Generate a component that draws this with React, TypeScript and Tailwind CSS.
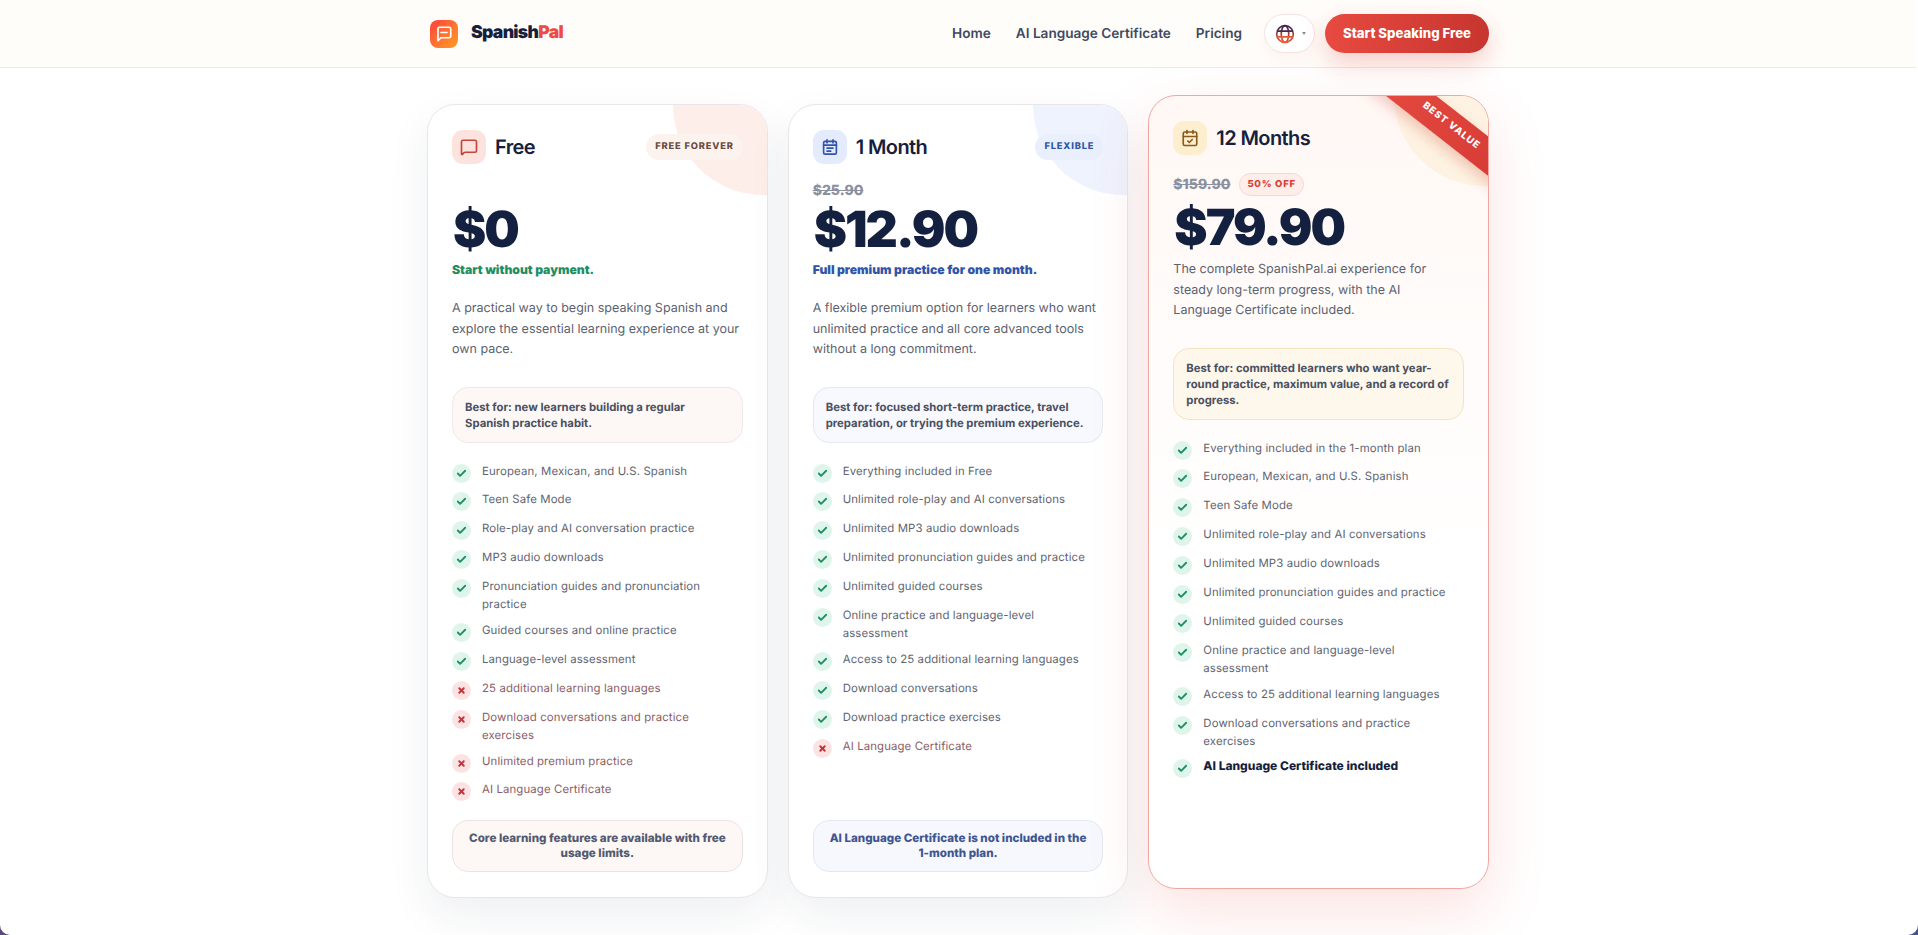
import React from "react";
import { Check, X, MessageSquare, CalendarCheck } from "lucide-react";

type Feature = { text: string; off?: boolean; strong?: boolean };

const freeFeatures: Feature[] = [
  { text: "European, Mexican, and U.S. Spanish" },
  { text: "Teen Safe Mode" },
  { text: "Role-play and AI conversation practice" },
  { text: "MP3 audio downloads" },
  { text: "Pronunciation guides and pronunciation practice" },
  { text: "Guided courses and online practice" },
  { text: "Language-level assessment" },
  { text: "25 additional learning languages", off: true },
  { text: "Download conversations and practice exercises", off: true },
  { text: "Unlimited premium practice", off: true },
  { text: "AI Language Certificate", off: true },
];

const monthFeatures: Feature[] = [
  { text: "Everything included in Free" },
  { text: "Unlimited role-play and AI conversations" },
  { text: "Unlimited MP3 audio downloads" },
  { text: "Unlimited pronunciation guides and practice" },
  { text: "Unlimited guided courses" },
  { text: "Online practice and language-level assessment" },
  { text: "Access to 25 additional learning languages" },
  { text: "Download conversations" },
  { text: "Download practice exercises" },
  { text: "AI Language Certificate", off: true },
];

const yearFeatures: Feature[] = [
  { text: "Everything included in the 1-month plan" },
  { text: "European, Mexican, and U.S. Spanish" },
  { text: "Teen Safe Mode" },
  { text: "Unlimited role-play and AI conversations" },
  { text: "Unlimited MP3 audio downloads" },
  { text: "Unlimited pronunciation guides and practice" },
  { text: "Unlimited guided courses" },
  { text: "Online practice and language-level assessment" },
  { text: "Access to 25 additional learning languages" },
  { text: "Download conversations and practice exercises" },
  { text: "AI Language Certificate included", strong: true },
];

function FeatureList({ items }: { items: Feature[] }) {
  return (
    <ul className="mt-[19px] flex flex-col gap-[7.9px]">
      {items.map((item) => (
        <li key={item.text} className="flex items-start gap-[11px] pr-2">
          {item.off ? (
            <span className="mt-0.5 flex h-[19px] w-[19px] shrink-0 items-center justify-center rounded-full bg-[#fbe3e3]">
              <X size={9} strokeWidth={5} className="text-[#c2343a]" />
            </span>
          ) : (
            <span className="mt-0.5 flex h-[19px] w-[19px] shrink-0 items-center justify-center rounded-full bg-[#dff5ec]">
              <Check size={11} strokeWidth={4} className="text-[#1f8f63]" />
            </span>
          )}
          <span
            className={
              item.off
                ? "text-[11.4px] leading-[18px] tracking-[0.01em] text-[#8a5d68]"
                : item.strong
                  ? "text-[12px] leading-[18px] font-extrabold text-[#161f3d]"
                  : "text-[11.4px] leading-[18px] tracking-[0.01em] text-[#5e6472]"
            }
          >
            {item.text}
          </span>
        </li>
      ))}
    </ul>
  );
}

function MonthIcon() {
  return (
    <svg width="18" height="18" viewBox="0 0 24 24" fill="none" stroke="#2f55a8" strokeWidth="2.2" strokeLinecap="round">
      <rect x="3.5" y="4.5" width="17" height="17" rx="2" />
      <path d="M8 2.5v4M16 2.5v4M3.5 9.5h17M8 13.5h8M8 17.5h5" />
    </svg>
  );
}

function Header() {
  return (
    <header className="h-[68px] border-b border-[#ebe9e9] bg-[#fffdfa]">
      <div className="mx-auto flex h-full w-[1062px] items-center justify-between">
        <div className="flex items-center gap-[13px] pl-[3px]">
          <span className="flex h-[28px] w-[28px] items-center justify-center rounded-[8px] bg-gradient-to-br from-[#ff3b3b] to-[#ff9a1f]">
            <svg width="18" height="18" viewBox="0 0 24 24" fill="none" stroke="#fff" strokeWidth="2.2" strokeLinecap="round" strokeLinejoin="round">
              <path d="M21 15a2 2 0 0 1-2 2H8l-4 4V5a2 2 0 0 1 2-2h13a2 2 0 0 1 2 2z" />
              <path d="M8 10h8" />
            </svg>
          </span>
          <span className="text-[17.6px] font-black tracking-[-0.04em] text-[#161f3d]">
            Spanish<span className="text-[#ee4b45]">Pal</span>
          </span>
        </div>
        <nav className="flex items-center">
          <a className="pt-px text-[13.6px] font-semibold text-[#414a5e]">Home</a>
          <a className="ml-[25px] pt-px text-[13.6px] font-semibold text-[#414a5e]">AI Language Certificate</a>
          <a className="ml-[25px] pt-px text-[13.6px] font-semibold text-[#414a5e]">Pricing</a>
          <button className="ml-[22px] flex h-[39px] w-[51px] items-center gap-[7px] rounded-full border border-[#f5e3e3] bg-white pl-[10px] shadow-[0_6px_16px_rgba(220,60,50,0.06)]">
            <svg width="20" height="20" viewBox="0 0 24 24" fill="none" stroke="url(#globeGrad)" strokeWidth="2">
              <defs>
                <linearGradient id="globeGrad" x1="0" y1="0" x2="0" y2="1">
                  <stop offset="0" stopColor="#3d2550" />
                  <stop offset="1" stopColor="#f0592f" />
                </linearGradient>
              </defs>
              <circle cx="12" cy="12" r="10" />
              <ellipse cx="12" cy="12" rx="4.5" ry="10" />
              <path d="M2.5 8.5h19M2.5 15.5h19" />
            </svg>
            <span className="h-0 w-0 border-x-[2px] border-t-[3px] border-x-transparent border-t-[#8b8f99]" />
          </button>
          <button className="ml-[10px] h-[39px] w-[164px] rounded-full bg-gradient-to-r from-[#e74a40] to-[#c7352f] text-[13.2px] font-extrabold text-white shadow-[0_10px_24px_rgba(220,60,50,0.25)]">
            Start Speaking Free
          </button>
        </nav>
      </div>
    </header>
  );
}

function FreeCard() {
  return (
    <section className="relative flex flex-1 flex-col overflow-hidden rounded-[28px] border border-[#e9e6e8] bg-white px-6 pt-[25px] pb-[25px] shadow-[0_18px_44px_rgba(30,40,70,0.07)]">
      <div className="absolute top-[-90px] right-[-86px] h-[180px] w-[180px] rounded-full bg-[#fdeeea]" />
      <div className="relative flex h-[34px] items-center justify-between">
        <div className="flex items-center gap-[9px]">
          <span className="flex h-[34px] w-[34px] items-center justify-center rounded-[11px] bg-[#fde3de]">
            <MessageSquare size={18} strokeWidth={2.2} className="text-[#c8423a]" />
          </span>
          <h2 className="text-[20px] font-semibold tracking-[-0.03em] text-[#161f3d]">Free</h2>
        </div>
        <span className="rounded-full bg-[#fdf3ee] px-[9px] py-[7px] text-[9.3px] leading-3 font-extrabold tracking-[0.09em] text-[#6b4b3e]">
          FREE FOREVER
        </span>
      </div>
      <div className="mt-[38px] ml-px text-[50px] leading-[56px] font-black tracking-[-0.04em] text-[#14203f]">$0</div>
      <p className="mt-[3px] text-[12.2px] leading-[18px] font-black text-[#1f8f63]">Start without payment.</p>
      <p className="mt-5 text-[12.5px] leading-[20.5px] text-[#5b6270]">
        A practical way to begin speaking Spanish and explore the essential learning experience at your own pace.
      </p>
      <div className="mt-[26px] rounded-2xl border border-[#efeae8] bg-[#fdf8f5] px-3 py-[11px] text-[11.3px] leading-4 font-bold text-[#4b5060]">
        Best for: new learners building a regular Spanish practice habit.
      </div>
      <FeatureList items={freeFeatures} />
      <div className="mt-auto rounded-2xl border border-[#e9e4e2] bg-[#fdf8f5] px-3 py-[10px] text-center text-[11.6px] leading-[15px] font-extrabold text-[#525a70]">
        Core learning features are available with free usage limits.
      </div>
    </section>
  );
}

function MonthCard() {
  return (
    <section className="relative flex flex-1 flex-col overflow-hidden rounded-[28px] border border-[#e9e6e8] bg-white px-6 pt-[25px] pb-[25px] shadow-[0_18px_44px_rgba(30,40,70,0.07)]">
      <div className="absolute top-[-90px] right-[-86px] h-[180px] w-[180px] rounded-full bg-[#eef3fe]" />
      <div className="relative flex h-[34px] items-center justify-between">
        <div className="flex items-center gap-[9px]">
          <span className="flex h-[34px] w-[34px] items-center justify-center rounded-[11px] bg-[#e4ebfd]">
            <MonthIcon />
          </span>
          <h2 className="text-[20px] font-semibold tracking-[-0.03em] text-[#161f3d]">1 Month</h2>
        </div>
        <span className="rounded-full bg-[#e9effc] px-[9px] py-[7px] text-[9.3px] leading-3 font-extrabold tracking-[0.09em] text-[#2f55a8]">
          FLEXIBLE
        </span>
      </div>
      <div className="relative mt-[17px] h-5 text-[14px] leading-5 font-extrabold text-[#8b90a0] line-through">$25.90</div>
      <div className="mt-px ml-px text-[50px] leading-[56px] font-black tracking-[-0.04em] text-[#14203f]">$12.90</div>
      <p className="mt-[3px] text-[12.2px] leading-[18px] font-black text-[#2f55a8]">Full premium practice for one month.</p>
      <p className="mt-5 text-[12.5px] leading-[20.5px] text-[#5b6270]">
        A flexible premium option for learners who want unlimited practice and all core advanced tools without a long commitment.
      </p>
      <div className="mt-[26px] rounded-2xl border border-[#e4e8f3] bg-[#f7f9fe] px-3 py-[11px] text-[11.3px] leading-4 font-bold text-[#4b5060]">
        Best for: focused short-term practice, travel preparation, or trying the premium experience.
      </div>
      <FeatureList items={monthFeatures} />
      <div className="mt-auto rounded-2xl border border-[#e2e7f3] bg-[#f6f8fe] px-3 py-[10px] text-center text-[11.6px] leading-[15px] font-extrabold text-[#3f5590]">
        AI Language Certificate is not included in the 1-month plan.
      </div>
    </section>
  );
}

function YearCard() {
  return (
    <section className="relative flex flex-1 -translate-y-[9px] flex-col overflow-hidden rounded-[28px] border border-[#f2a6a0] bg-gradient-to-b from-[#fff8f5] to-white to-60% px-6 pt-[25px] pb-6 shadow-[0_22px_60px_rgba(229,72,63,0.16)]">
      <div className="absolute top-[-90px] right-[-86px] h-[180px] w-[180px] rounded-full bg-[#fef3e2]" />
      <div className="absolute top-[14px] right-[-51px] flex h-[31px] w-[180px] rotate-[38deg] items-center justify-center bg-gradient-to-r from-[#e64a40] to-[#d43a35] pl-[4px] text-[9.7px] font-extrabold tracking-[0.1em] text-white shadow-[0_6px_14px_rgba(200,50,40,0.25)]">
        BEST VALUE
      </div>
      <div className="relative flex h-[34px] items-center gap-[9px]">
        <span className="flex h-[34px] w-[34px] items-center justify-center rounded-[11px] bg-[#fdeecf]">
          <CalendarCheck size={18} strokeWidth={2.2} className="text-[#8a5a1c]" />
        </span>
        <h2 className="text-[20px] font-semibold tracking-[-0.03em] text-[#161f3d]">12 Months</h2>
      </div>
      <div className="relative mt-[18px] flex h-[23px] items-center gap-[9px]">
        <span className="text-[14px] font-extrabold text-[#8b90a0] line-through">$159.90</span>
        <span className="rounded-full border border-[#fbd5cd] bg-[#fdeeea] px-[7px] text-[9.5px] leading-[21px] font-extrabold tracking-[0.08em] text-[#d93e36]">
          50% OFF
        </span>
      </div>
      <div className="mt-[4px] ml-px text-[50px] leading-[56px] font-black tracking-[-0.04em] text-[#14203f]">$79.90</div>
      <p className="mt-1 pr-3 text-[12.5px] leading-[20.5px] text-[#5b6270]">
        The complete SpanishPal.ai experience for steady long-term progress, with the AI Language Certificate included.
      </p>
      <div className="mt-[26px] rounded-2xl border border-[#f5e3bf] bg-[#fef8ec] px-3 py-[11px] text-[11.3px] leading-4 font-bold text-[#4b5060]">
        Best for: committed learners who want year-round practice, maximum value, and a record of progress.
      </div>
      <FeatureList items={yearFeatures} />
    </section>
  );
}

export default function App() {
  return (
    <div className="h-screen overflow-hidden bg-gradient-to-r from-[#5a4a80] to-[#46528f] font-['Inter',sans-serif] [text-rendering:geometricPrecision]">
      <div className="h-full overflow-hidden rounded-b-[10px] bg-white pr-0.5">
        <Header />
        <main className="mx-auto flex h-[830px] w-[1062px] items-stretch gap-5 pt-9">
          <FreeCard />
          <MonthCard />
          <YearCard />
        </main>
      </div>
    </div>
  );
}
